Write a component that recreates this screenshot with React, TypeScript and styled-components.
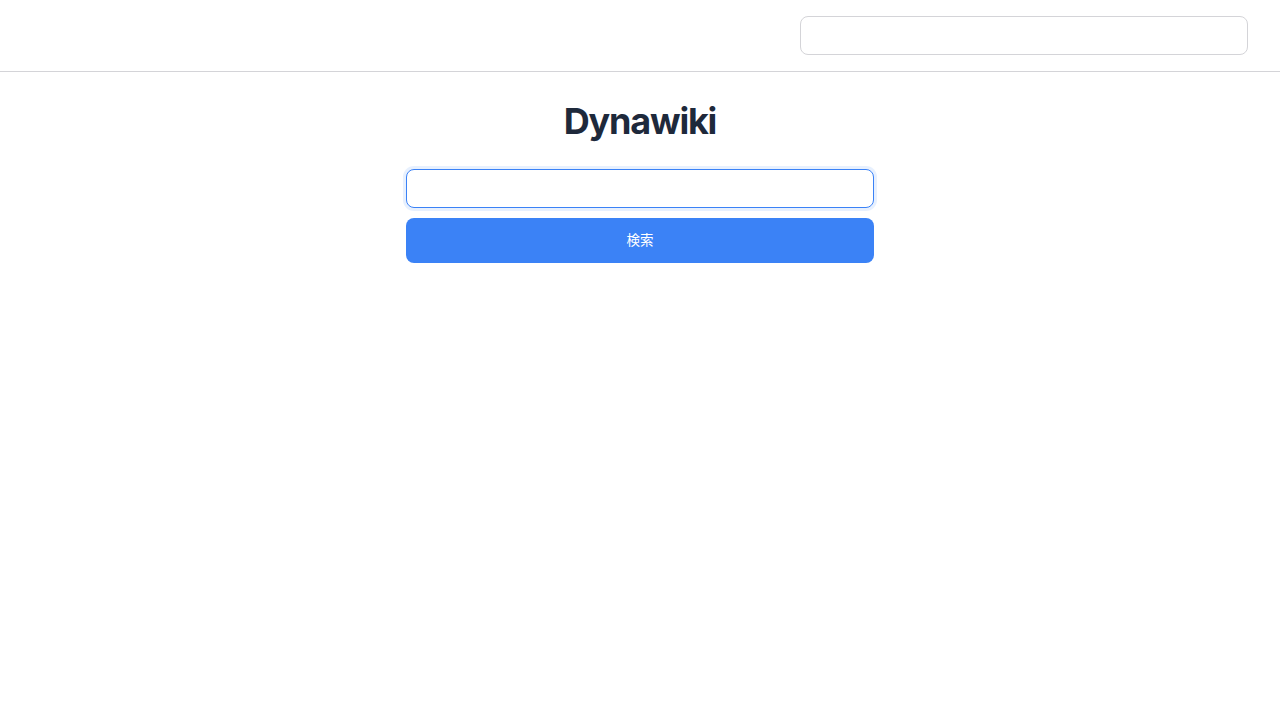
import React from "react";
import styled, { createGlobalStyle } from "styled-components";

const GlobalStyle = createGlobalStyle`
  html, body {
    margin: 0;
    padding: 0;
    background: #ffffff;
    font-family: Inter, "Noto Sans CJK JP", sans-serif;
  }
  * { box-sizing: border-box; }
`;

const Header = styled.header`
  height: 72px;
  display: flex;
  align-items: flex-start;
  justify-content: flex-end;
  padding: 16px 32px 0;
  border-bottom: 1px solid #d4d4d8;
`;

const HeaderInput = styled.input`
  width: 448px;
  height: 39px;
  border: 1px solid #d4d4d8;
  border-radius: 8px;
  padding: 0 12px;
  font-size: 14px;
  font-family: inherit;
  outline: none;
  background: #fff;
`;

const Main = styled.main`
  display: flex;
  flex-direction: column;
  align-items: center;
  padding-top: 29px;
`;

const Title = styled.h1`
  margin: 0 0 28px;
  font-family: Inter, sans-serif;
  font-size: 36px;
  line-height: 40px;
  font-weight: 700;
  letter-spacing: -1.2px;
  color: #1e293b;
`;

const SearchForm = styled.form`
  width: 468px;
  display: flex;
  flex-direction: column;
  gap: 10px;
`;

const SearchInput = styled.input`
  width: 100%;
  height: 39px;
  border: 1px solid #3b82f6;
  border-radius: 8px;
  padding: 0 12px;
  font-size: 14px;
  font-family: inherit;
  outline: none;
  background: #fff;
  box-shadow: 0 0 0 3px rgba(59, 130, 246, 0.12);
`;

const SearchButton = styled.button`
  width: 100%;
  height: 45px;
  border: none;
  border-radius: 8px;
  background: #3b82f6;
  color: #ffffff;
  font-size: 13.5px;
  padding: 0 0 4px;
  font-family: Inter, "Noto Sans CJK JP", sans-serif;
  cursor: pointer;
`;

export default function App() {
  return (
    <>
      <GlobalStyle />
      <Header>
        <HeaderInput type="text" aria-label="search" />
      </Header>
      <Main>
        <Title>Dynawiki</Title>
        <SearchForm onSubmit={(e) => e.preventDefault()}>
          <SearchInput type="text" aria-label="query" />
          <SearchButton type="submit">検索</SearchButton>
        </SearchForm>
      </Main>
    </>
  );
}
